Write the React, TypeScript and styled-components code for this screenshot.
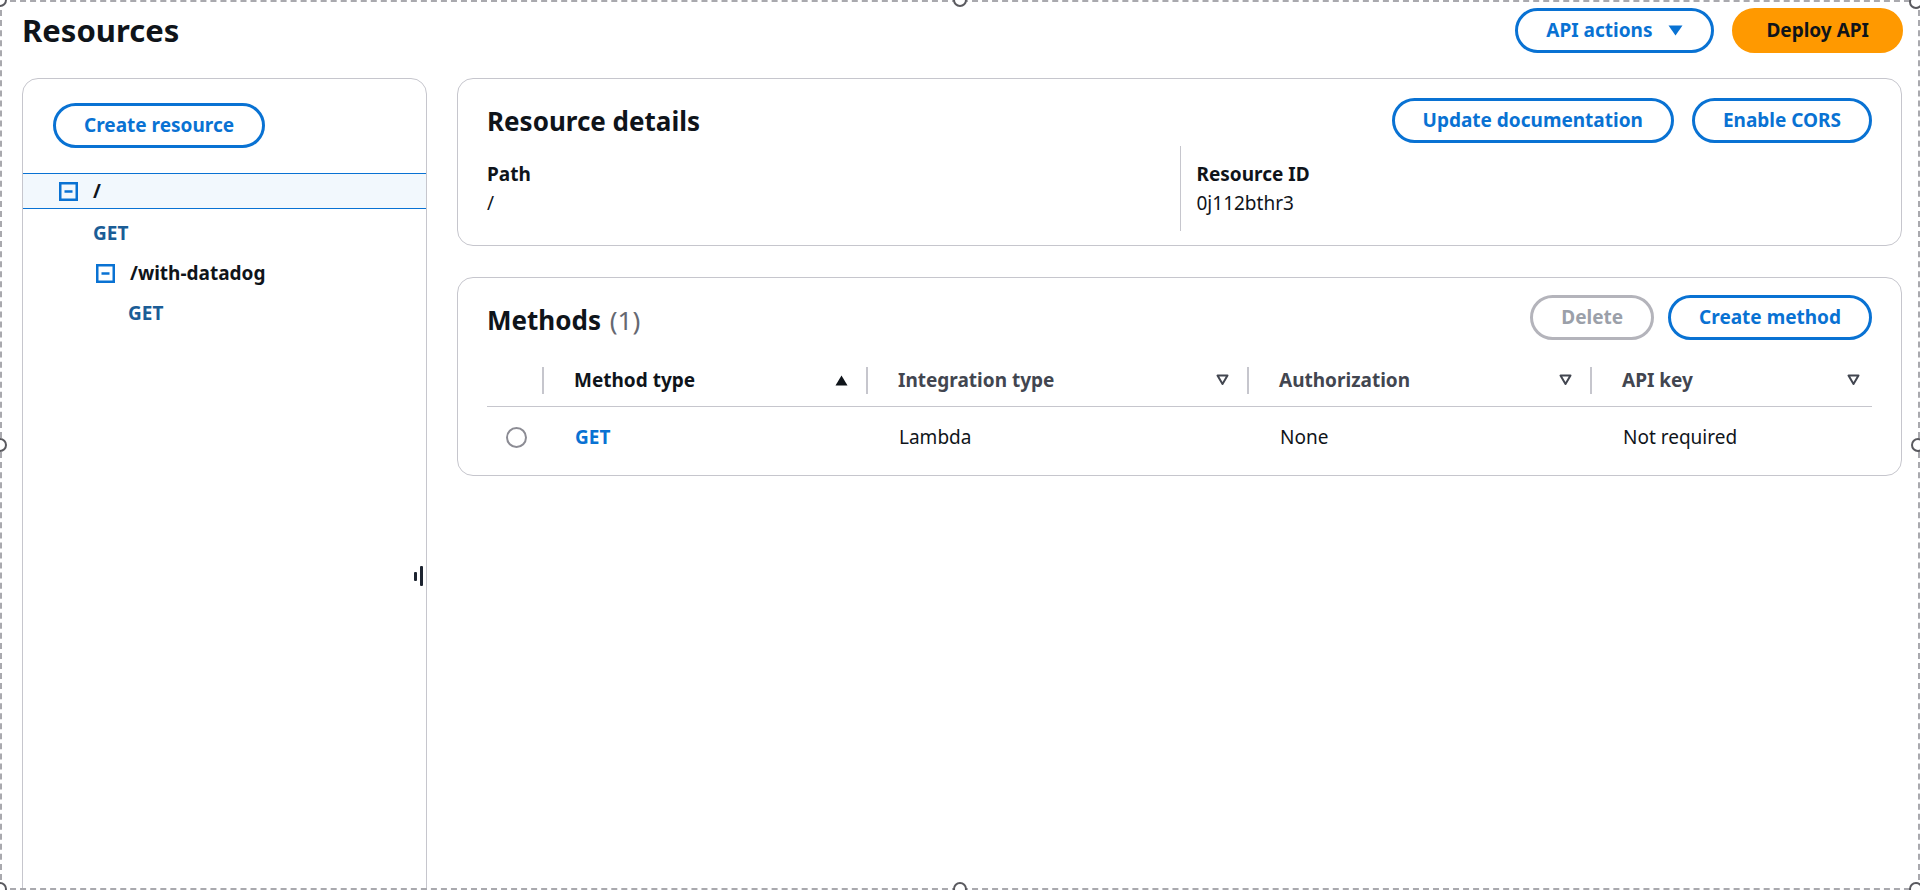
import React from "react";
import styled, { createGlobalStyle } from "styled-components";

const GlobalStyle = createGlobalStyle`
  html, body { margin: 0; padding: 0; background: #ffffff; }
  body {
    font-family: "Noto Sans", "Open Sans", Arial, sans-serif;
    color: #0f141a;
    -webkit-font-smoothing: antialiased;
  }
  * { box-sizing: border-box; }
`;

const Screen = styled.div`
  position: relative;
  width: 1920px;
  height: 890px;
  overflow: hidden;
  background: #ffffff;
`;

const Header = styled.header`
  display: flex;
  align-items: center;
  justify-content: space-between;
  height: 46px;
  margin-top: 7px;
  padding: 0 17px 0 22px;
`;

const Title = styled.h1`
  margin: 0;
  font-size: 31px;
  font-weight: 700;
  line-height: 1;
`;

const Actions = styled.div<{ $gap?: number }>`
  display: flex;
  align-items: center;
  gap: ${(p) => p.$gap ?? 18}px;
`;

type Variant = "normal" | "primary" | "disabled";

const Button = styled.button<{ $variant?: Variant }>`
  display: inline-flex;
  align-items: center;
  gap: 16px;
  height: 45px;
  padding: 0 ${(p) => (p.$variant === "primary" ? 31 : 28)}px;
  border-radius: 999px;
  border: 3px solid
    ${(p) =>
      p.$variant === "primary" ? "#ff9900" : p.$variant === "disabled" ? "#b4b4bb" : "#0972d3"};
  background: ${(p) => (p.$variant === "primary" ? "#ff9900" : "#ffffff")};
  color: ${(p) =>
    p.$variant === "primary" ? "#0f141a" : p.$variant === "disabled" ? "#9ba0a9" : "#0972d3"};
  font-family: inherit;
  font-size: 19px;
  font-weight: 700;
  line-height: 1;
  white-space: nowrap;
  cursor: ${(p) => (p.$variant === "disabled" ? "default" : "pointer")};
`;

const Body = styled.div`
  display: grid;
  grid-template-columns: 405px 1fr;
  column-gap: 30px;
  padding: 25px 18px 0 22px;
`;

const SidePanel = styled.aside`
  position: relative;
  height: 840px;
  border: 1px solid #c6c6cd;
  border-radius: 16px;
  padding-top: 24px;
`;

const SideTop = styled.div`
  padding-left: 30px;
`;

const Tree = styled.ul`
  list-style: none;
  margin: 25px 0 0;
  padding: 0;
`;

const TreeRow = styled.li<{ $indent: number; $selected?: boolean }>`
  display: flex;
  align-items: center;
  gap: 15px;
  height: ${(p) => (p.$selected ? 36 : 40)}px;
  margin: ${(p) => (p.$selected ? "2px 0 4px" : "0")};
  padding-left: ${(p) => p.$indent}px;
  background: ${(p) => (p.$selected ? "#f2f8fd" : "transparent")};
  border-top: ${(p) => (p.$selected ? "1px solid #0972d3" : "none")};
  border-bottom: ${(p) => (p.$selected ? "1px solid #0972d3" : "none")};
`;

const ResourceName = styled.span`
  font-size: 19px;
  font-weight: 700;
  color: #0f141a;
`;

const MethodName = styled.span`
  font-size: 19px;
  font-weight: 700;
  color: #1b5d96;
`;

const Resizer = styled.div`
  position: absolute;
  right: 3px;
  top: 487px;
  display: flex;
  align-items: center;
  gap: 3px;
`;

const ResizerBar = styled.span<{ $h: number }>`
  display: block;
  width: 3px;
  height: ${(p) => p.$h}px;
  background: #1d2430;
  border-radius: 1px;
`;

const Main = styled.main`
  display: flex;
  flex-direction: column;
  gap: 31px;
`;

const Card = styled.section<{ $pt: number; $pb: number }>`
  border: 1px solid #c6c6cd;
  border-radius: 16px;
  padding: ${(p) => p.$pt}px 29px ${(p) => p.$pb}px 29px;
`;

const CardHeader = styled.div`
  display: flex;
  align-items: center;
  justify-content: space-between;
  height: 45px;
`;

const CardTitle = styled.h2<{ $shift?: number }>`
  margin: 0;
  padding-top: ${(p) => p.$shift ?? 0}px;
  font-size: 26px;
  font-weight: 700;
  line-height: 1;
`;

const Counter = styled.span`
  font-weight: 400;
  color: #656871;
  margin-left: 2px;
`;

const KeyValues = styled.div`
  display: grid;
  grid-template-columns: 1fr 1fr;
  margin-top: 3px;
`;

const KVItem = styled.div<{ $divided?: boolean }>`
  padding: 14px 0 13px ${(p) => (p.$divided ? 16 : 0)}px;
  border-left: ${(p) => (p.$divided ? "1px solid #c6c6cd" : "none")};
  font-size: 19px;
  line-height: 29px;
`;

const KVLabel = styled.div`
  font-weight: 700;
`;

const KVValue = styled.div`
  font-weight: 400;
`;

const Table = styled.div`
  margin-top: 14px;
`;

const Columns = "57px 324px 381px 343px 1fr";

const HeadRow = styled.div`
  display: grid;
  grid-template-columns: ${Columns};
  height: 53px;
  border-bottom: 1px solid #c6c6cd;
`;

const HeadCell = styled.div<{ $first?: boolean; $active?: boolean }>`
  display: flex;
  align-items: center;
  padding-left: ${(p) => (p.$first ? 0 : 30)}px;
  font-size: 19px;
  font-weight: 700;
  color: ${(p) => (p.$active ? "#0f141a" : "#424650")};
  white-space: nowrap;
`;

const HeadLabel = styled.span`
  flex: 1;
`;

const SortIcon = styled.svg<{ $end?: number }>`
  flex: none;
  margin-right: ${(p) => p.$end ?? 18}px;
`;

const ColDivider = styled.span`
  flex: none;
  width: 2px;
  height: 27px;
  background: #c6c6cd;
`;

const DataRow = styled.div`
  display: grid;
  grid-template-columns: ${Columns};
  height: 60px;
  align-items: center;
`;

const DataCell = styled.div<{ $first?: boolean }>`
  padding-left: ${(p) => (p.$first ? 19 : 31)}px;
  font-size: 19px;
  display: flex;
  align-items: center;
`;

const Radio = styled.span`
  display: block;
  width: 21px;
  height: 21px;
  border-radius: 50%;
  border: 2px solid #8c8c94;
  background: #fff;
`;

const Link = styled.a`
  color: #0972d3;
  font-weight: 700;
  text-decoration: none;
`;

const FrameOverlay = styled.div`
  position: absolute;
  inset: 0;
  border: 2px dashed #a9a9ae;
  pointer-events: none;
`;

const Handle = styled.span<{ $x: number; $y: number }>`
  position: absolute;
  left: ${(p) => p.$x - 7}px;
  top: ${(p) => p.$y - 7}px;
  width: 14px;
  height: 14px;
  border-radius: 50%;
  border: 2px solid #5a5a5f;
  background: #ffffff;
  pointer-events: none;
`;

const ExpandIcon = () => (
  <svg width="19" height="19" viewBox="0 0 19 19" aria-hidden="true">
    <rect x="1.25" y="1.25" width="16.5" height="16.5" fill="none" stroke="#0972d3" strokeWidth="2.5" />
    <line x1="5.5" y1="9.5" x2="13.5" y2="9.5" stroke="#0972d3" strokeWidth="2.5" />
  </svg>
);

const CaretDown = () => (
  <svg width="15" height="11" viewBox="0 0 15 11" aria-hidden="true">
    <path d="M0.5 0.5 H14.5 L7.5 10.5 Z" fill="#0972d3" />
  </svg>
);

const SortUp = () => (
  <SortIcon width="13" height="11" viewBox="0 0 13 11" aria-hidden="true">
    <path d="M6.5 0.5 L12.5 10.5 H0.5 Z" fill="#0f141a" />
  </SortIcon>
);

const SortDown = ({ end }: { end?: number }) => (
  <SortIcon $end={end} width="13" height="12" viewBox="0 0 13 12" aria-hidden="true">
    <path d="M1.5 1.5 H11.5 L6.5 10 Z" fill="none" stroke="#424650" strokeWidth="2" strokeLinejoin="round" />
  </SortIcon>
);

const handles: Array<[number, number]> = [
  [0, 0],
  [960, 0],
  [1916, 2],
  [0, 445],
  [1918, 445],
  [0, 889],
  [960, 889],
  [1916, 889],
];

export default function App() {
  return (
    <Screen>
      <GlobalStyle />
      <Header>
        <Title>Resources</Title>
        <Actions>
          <Button>
            API actions
            <CaretDown />
          </Button>
          <Button $variant="primary">Deploy API</Button>
        </Actions>
      </Header>

      <Body>
        <SidePanel>
          <SideTop>
            <Button>Create resource</Button>
          </SideTop>
          <Tree>
            <TreeRow $indent={36} $selected>
              <ExpandIcon />
              <ResourceName>/</ResourceName>
            </TreeRow>
            <TreeRow $indent={70}>
              <MethodName>GET</MethodName>
            </TreeRow>
            <TreeRow $indent={73}>
              <ExpandIcon />
              <ResourceName>/with-datadog</ResourceName>
            </TreeRow>
            <TreeRow $indent={105}>
              <MethodName>GET</MethodName>
            </TreeRow>
          </Tree>
          <Resizer>
            <ResizerBar $h={9} />
            <ResizerBar $h={20} />
          </Resizer>
        </SidePanel>

        <Main>
          <Card $pt={19} $pb={14}>
            <CardHeader>
              <CardTitle>Resource details</CardTitle>
              <Actions>
                <Button>Update documentation</Button>
                <Button>Enable CORS</Button>
              </Actions>
            </CardHeader>
            <KeyValues>
              <KVItem>
                <KVLabel>Path</KVLabel>
                <KVValue>/</KVValue>
              </KVItem>
              <KVItem $divided>
                <KVLabel>Resource ID</KVLabel>
                <KVValue>0j112bthr3</KVValue>
              </KVItem>
            </KeyValues>
          </Card>

          <Card $pt={17} $pb={8}>
            <CardHeader>
              <CardTitle $shift={4}>
                Methods <Counter>(1)</Counter>
              </CardTitle>
              <Actions $gap={14}>
                <Button $variant="disabled">Delete</Button>
                <Button>Create method</Button>
              </Actions>
            </CardHeader>
            <Table>
              <HeadRow>
                <HeadCell $first>
                  <HeadLabel />
                  <ColDivider />
                </HeadCell>
                <HeadCell $active>
                  <HeadLabel>Method type</HeadLabel>
                  <SortUp />
                  <ColDivider />
                </HeadCell>
                <HeadCell>
                  <HeadLabel>Integration type</HeadLabel>
                  <SortDown />
                  <ColDivider />
                </HeadCell>
                <HeadCell>
                  <HeadLabel>Authorization</HeadLabel>
                  <SortDown />
                  <ColDivider />
                </HeadCell>
                <HeadCell>
                  <HeadLabel>API key</HeadLabel>
                  <SortDown end={12} />
                </HeadCell>
              </HeadRow>
              <DataRow>
                <DataCell $first>
                  <Radio />
                </DataCell>
                <DataCell>
                  <Link href="#">GET</Link>
                </DataCell>
                <DataCell>Lambda</DataCell>
                <DataCell>None</DataCell>
                <DataCell>Not required</DataCell>
              </DataRow>
            </Table>
          </Card>
        </Main>
      </Body>

      <FrameOverlay />
      {handles.map(([x, y]) => (
        <Handle key={`${x}-${y}`} $x={x} $y={y} />
      ))}
    </Screen>
  );
}
